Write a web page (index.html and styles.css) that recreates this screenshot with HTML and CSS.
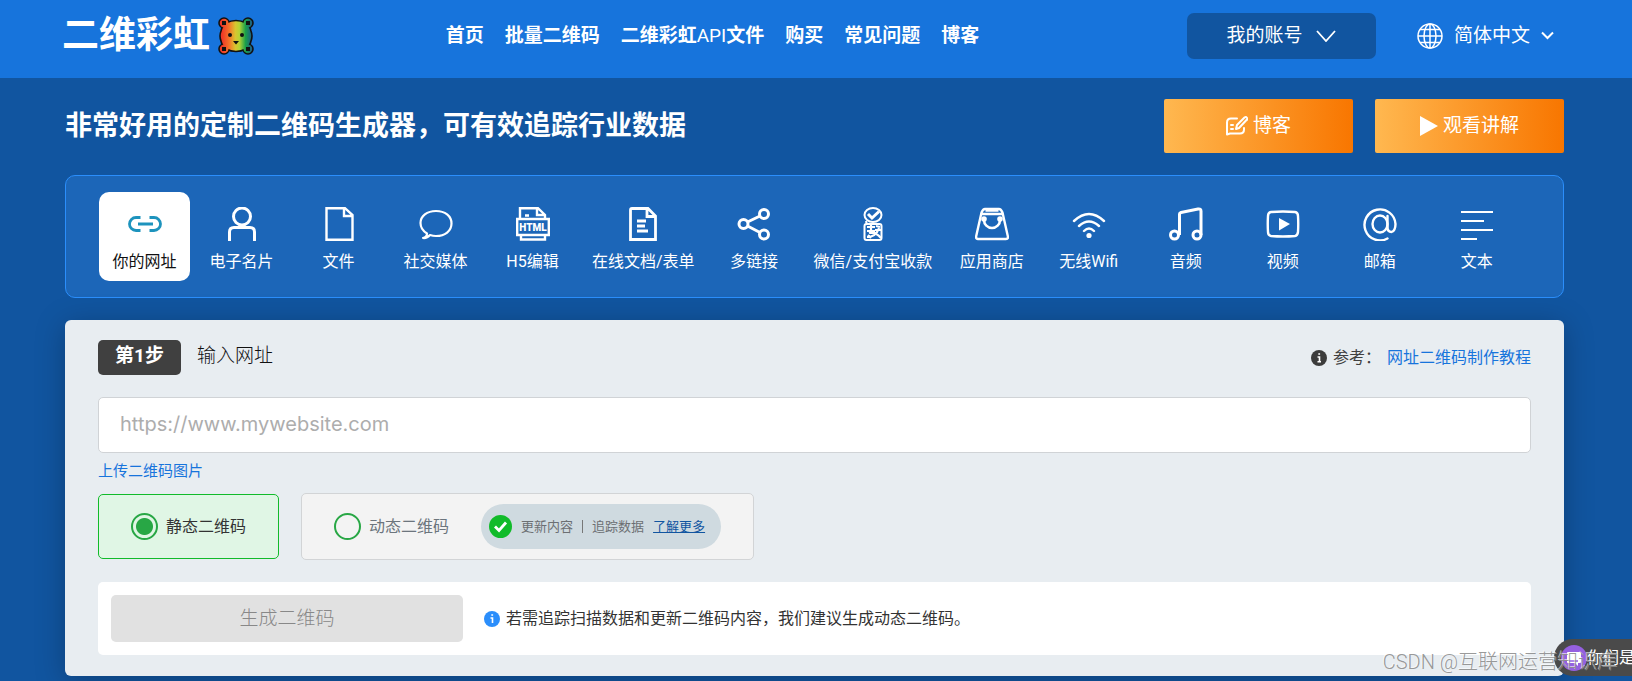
FILE: index.html
```html
<!DOCTYPE html>
<html lang="zh-CN">
<head>
<meta charset="utf-8">
<title>二维彩虹</title>
<link rel="stylesheet" href="styles.css">
</head>
<body>
<header class="header">
  <a class="logo" href="#">
    <span class="logo-text">二维彩虹</span>
    <svg class="logo-bear" viewBox="0 0 36 38" aria-hidden="true">
      <defs>
        <linearGradient id="rainbow" gradientUnits="userSpaceOnUse" x1="1" y1="0" x2="35" y2="0">
          <stop offset="0.1" stop-color="#f03a26"/><stop offset="0.3" stop-color="#f5742a"/><stop offset="0.48" stop-color="#d9c52f"/><stop offset="0.6" stop-color="#b5d334"/><stop offset="0.78" stop-color="#1aa04a"/><stop offset="0.96" stop-color="#1d5f86"/>
        </linearGradient>
      </defs>
      <g fill="url(#rainbow)" stroke="#111" stroke-width="1.6">
        <circle cx="6" cy="6" r="5"/><circle cx="30" cy="6" r="5"/><circle cx="6" cy="32" r="5"/><circle cx="30" cy="32" r="5"/>
        <path d="M8 6Q18 1 28 6Q32 9 33 14Q35 19 33 24Q32 29 28 32Q18 37 8 32Q4 29 3 24Q1 19 3 14Q4 9 8 6Z"/>
      </g>
      <g fill="url(#rainbow)"><circle cx="6.500" cy="6.500" r="4"/><circle cx="29.500" cy="6.500" r="4"/><circle cx="6.500" cy="31.500" r="4"/><circle cx="29.500" cy="31.500" r="4"/></g>
      <g fill="#111"><path d="M4 4h4v4H4zM28 4h4v4h-4zM4 30h4v4H4zM28 30h4v4h-4z"/><circle cx="12" cy="18" r="2"/><circle cx="24" cy="18" r="2"/><path d="M15 24h6l-3 3.500z"/></g>
    </svg>
  </a>
  <nav class="nav">
    <a href="#">首页</a>
    <a href="#">批量二维码</a>
    <a href="#">二维彩虹<span class="latin">API</span>文件</a>
    <a href="#">购买</a>
    <a href="#">常见问题</a>
    <a href="#">博客</a>
  </nav>
  <button class="account" type="button">我的账号
    <svg width="20" height="12" viewBox="0 0 20 12" fill="none" stroke="#fff" stroke-width="1.800"><path d="M1 1l9 10 9-10"/></svg>
  </button>
  <button class="language" type="button">
    <svg width="26" height="26" viewBox="0 0 26 26" fill="none" stroke="#fff" stroke-width="1.500"><circle cx="13" cy="13" r="12"/><ellipse cx="13" cy="13" rx="6" ry="12"/><path d="M13 1v24M1 13h24M3 6.500h20M3 19.500h20"/></svg>
    <span>简体中文</span>
    <svg width="13" height="9" viewBox="0 0 13 9" fill="none" stroke="#fff" stroke-width="2"><path d="M1 1.500l5.500 5.500L12 1.500"/></svg>
  </button>
</header>

<main class="main">
  <div class="intro">
    <h1 class="title">非常好用的定制二维码生成器，可有效追踪行业数据</h1>
    <a class="cta" href="#">
      <svg width="22" height="20" viewBox="0 0 22 20" fill="none" stroke="#fff" stroke-width="2" stroke-linecap="round" stroke-linejoin="round"><path d="M11 2.500H5Q1 2.500 1 6.500V18.500L4 17.500H14Q18 17.500 18 13.500V12M10 13l1-4L18.500 1.500Q20 .500 21 2T20.500 4L13 12zM5 9h2M5 13h2"/></svg>
      博客</a>
    <a class="cta" href="#">
      <svg width="18" height="20" viewBox="0 0 18 20"><path d="M0 0l18 10L0 20z" fill="#fff"/></svg>
      观看讲解</a>
  </div>

  <div class="types">
    <button class="type active" type="button">
      <svg viewBox="0 0 34 34" fill="none" stroke="#1d93bd" stroke-width="2.800"><path d="M12.500 10.500H8a6.500 6.500 0 0 0 0 13h4.500M21.500 10.500h4.500a6.500 6.500 0 0 1 0 13h-4.500M10 17h15"/></svg>你的网址</button>
    <button class="type" type="button">
      <svg viewBox="0 0 34 34" fill="none" stroke="#fff" stroke-width="3"><circle cx="17" cy="9.500" r="8.500"/><path d="M4.500 34V25Q4.500 20.500 9 20.500H25Q29.500 20.500 29.500 25V34"/></svg>电子名片</button>
    <button class="type" type="button">
      <svg viewBox="0 0 34 34" fill="none" stroke="#fff" stroke-width="2.400"><path d="M4.500 1.200H23L30.500 8V32.800H4.500ZM22 1V9H30"/></svg>文件</button>
    <button class="type" type="button">
      <svg viewBox="0 0 34 34" fill="none" stroke="#fff" stroke-width="2.200" stroke-linejoin="round"><path d="M8 26.500Q1.500 22.500 1.500 16C1.500 9 8 4 17 4S32.500 9 32.500 16.500 26 29 17 29Q14 29 11 28Q8 31.500 4 31Q8 30 8 26.500Z"/></svg>社交媒体</button>
    <button class="type" type="button">
      <svg viewBox="0 0 34 34" fill="none" stroke="#fff" stroke-width="2.400"><path d="M4 12V1.200H22L29 8V12M21 1V8H29M9 8.500h4M1.200 12H32.800V28H1.200ZM5 28V32.500H29V28"/><text class="html-mark" x="17" y="23.500" text-anchor="middle">HTML</text></svg>H5编辑</button>
    <button class="type" type="button">
      <svg viewBox="0 0 34 34" fill="none" stroke="#fff" stroke-width="2.800"><path d="M6 1.500H22L29.500 9V32.500H4.500V3Q4.500 1.500 6 1.500ZM21 2V9.500H29M11 14H20M11 19H19M11 24H22"/></svg>在线文档/表单</button>
    <button class="type" type="button">
      <svg viewBox="0 0 34 34" fill="none" stroke="#fff" stroke-width="3"><circle cx="6.500" cy="17" r="4.500"/><circle cx="27" cy="7" r="4.500"/><circle cx="27" cy="27.500" r="4.500"/><path d="M10.500 15L23 9M10.500 19L23 25.500"/></svg>多链接</button>
    <button class="type" type="button">
      <svg viewBox="0 0 34 34" fill="none" stroke="#fff" stroke-width="2"><ellipse cx="17" cy="8" rx="8.500" ry="7"/><path d="M12 7l4 4 7-6.500" stroke-width="3"/><path d="M10 14l1 4"/><rect x="8.500" y="17" width="17" height="16" rx="2"/><path d="M11 20h8M15 18v9M11 24h8M20 19l4 1M23 21Q20 30 11 30M13 26q6-2 12 5M19 23h6M12 28l3 3" stroke-width="2.200"/></svg>微信/支付宝收款</button>
    <button class="type" type="button">
      <svg viewBox="0 0 34 34" fill="none" stroke="#fff" stroke-width="2.400"><path d="M6.500 5.500Q8 2 10 2H24Q26 2 27.500 5.500L33 30Q33 32 31 32H3Q1 32 1 30ZM6.500 7H27.500M10.500 3.500H23.500"/><path d="M9 11V13A8 8 0 0 0 25 13V11" stroke-width="2.600"/><g fill="#fff" stroke="none"><circle cx="9" cy="12" r="2.800"/><circle cx="25" cy="12" r="2.800"/></g></svg>应用商店</button>
    <button class="type" type="button">
      <svg viewBox="0 0 34 34" fill="none" stroke="#fff" stroke-width="2.400" stroke-linecap="round"><path d="M2 14Q17 0 32 14M7 19Q17 10 27 19M12 24Q17 19 22 24"/><circle cx="17" cy="28.500" r="2.600" fill="#fff" stroke="none"/></svg>无线Wifi</button>
    <button class="type" type="button">
      <svg viewBox="0 0 34 34" fill="none" stroke="#fff" stroke-width="3" stroke-linejoin="round"><circle cx="5.500" cy="28" r="4"/><circle cx="28" cy="28" r="4"/><path d="M10.500 28V7Q10.500 6 12 5.500L29 2Q32 1.500 32 4V28"/></svg>音频</button>
    <button class="type" type="button">
      <svg viewBox="0 0 34 34" fill="none" stroke="#fff" stroke-width="2.400"><path d="M5 5Q17 4 29 5Q32 5.500 32 9Q32.500 17 32 25Q31.500 28.500 29 29Q17 30 5 29Q2 28.500 2 25Q1.500 17 2 9Q2 5.500 5 5Z"/><path d="M13 11L24 17 13 23.500Z" fill="#fff" stroke="none"/></svg>视频</button>
    <button class="type" type="button">
      <svg viewBox="0 0 34 34" fill="none" stroke="#fff" stroke-width="2.400" stroke-linecap="round"><ellipse cx="17" cy="17" rx="7.500" ry="8.500"/><path d="M24.500 9V20Q24.500 25 28.500 25C31 25 32.500 21 32.500 17A15.500 15.500 0 1 0 24.500 31.500"/></svg>邮箱</button>
    <button class="type" type="button">
      <svg viewBox="0 0 34 34" fill="none" stroke="#fff" stroke-width="2.200"><path d="M1 5H33M1 14H24M1 23H33M1 32H17"/></svg>文本</button>
  </div>

  <form class="card">
    <div class="step">
      <span class="badge">第1步</span>
      <label class="step-title" for="url">输入网址</label>
      <div class="reference">
        <svg width="16" height="16" viewBox="0 0 16 16"><circle cx="8" cy="8" r="8" fill="#3c3c3c"/><path d="M6.500 7H8.500V11.500M6.500 11.800h3.500M7.300 4h1.800" stroke="#fff" stroke-width="1.600" fill="none"/></svg>
        <span>参考：</span><a href="#">网址二维码制作教程</a>
      </div>
    </div>
    <input class="url" id="url" type="text" placeholder="https://www.mywebsite.com">
    <a class="upload" href="#">上传二维码图片</a>
    <div class="options">
      <div class="option selected"><label class="choice"><input type="radio" name="kind" checked>静态二维码</label></div>
      <div class="option"><label class="choice"><input type="radio" name="kind">动态二维码</label>
        <div class="pill">
          <svg width="23" height="23" viewBox="0 0 23 23"><circle cx="11.500" cy="11.500" r="11.500" fill="#11bb2a"/><path d="M6 11.500l4 4 7-8" stroke="#fff" stroke-width="2.800" fill="none"/></svg>
          <span>更新内容</span><span class="bar"></span><span>追踪数据</span><a href="#">了解更多</a>
        </div>
      </div>
    </div>
    <div class="submit-row">
      <button class="submit" type="button" disabled>生成二维码</button>
      <p class="hint">
        <svg width="16" height="16" viewBox="0 0 16 16"><circle cx="8" cy="8" r="8" fill="#2b8efb"/><path d="M6.500 7H8.500V12M7.300 4h1.800" stroke="#fff" stroke-width="1.600" fill="none"/></svg>
        若需追踪扫描数据和更新二维码内容，我们建议生成动态二维码。</p>
    </div>
  </form>
</main>

<button class="chat" type="button">
  <svg width="26" height="26" viewBox="0 0 26 26"><circle cx="13" cy="13" r="13" fill="#9560e0"/><path d="M7 7H19Q20 7 20 8V17Q20 18 19 18H17V21L14 18H7Q6 18 6 17V8Q6 7 7 7Z" fill="#fff"/><path d="M8 16h9" stroke="#9560e0" stroke-width="1.500"/></svg>
  <span>你们是</span>
</button>
<div class="watermark">CSDN @互联网运营知识库</div>
</body>
</html>
```

FILE: styles.css
```css
* { box-sizing: border-box; }
body {
  margin: 0;
  position: relative;
  overflow-x: hidden;
  background: #1155a0;
  color: #222;
  font-family: Roboto, "Noto Sans CJK SC", sans-serif;
  font-size: 16px;
  font-weight: 400;
  line-height: 24px;
}
a { color: #1774dc; text-decoration: none; }
button { font: inherit; border: 0; cursor: pointer; }
svg { flex: none; }

.header {
  display: flex;
  align-items: center;
  height: 78px;
  padding: 0 68px 7px 62px;
  background: #1774dc;
  color: #fff;
}
.logo { display: flex; align-items: center; gap: 8px; color: #fff; }
.logo-text { font-size: 37px; line-height: 44px; font-weight: 700; }
.logo-bear { width: 36px; height: 38px; }
.nav { display: flex; gap: 21px; margin: 0 auto; padding-right: 16px; }
.nav a { color: #fff; font-size: 19px; font-weight: 700; white-space: nowrap; }
.nav .latin { font-weight: 400; }
.account {
  display: flex;
  align-items: center;
  justify-content: center;
  gap: 14px;
  width: 189px;
  height: 46px;
  border-radius: 7px;
  background: #1155a0;
  color: #fff;
  font-size: 19px;
}
.language {
  display: flex;
  align-items: center;
  gap: 11px;
  margin-left: 41px;
  padding: 0 10px 0 0;
  background: none;
  color: #fff;
  font-size: 19px;
}

.main { padding: 21px 68px 5px 65px; }
.intro { display: flex; align-items: center; gap: 22px; margin-bottom: 22px; }
.title { flex: 1; margin: 0; color: #fff; font-size: 27px; line-height: 36px; font-weight: 700; }
.cta {
  display: flex;
  align-items: center;
  justify-content: center;
  gap: 5px;
  width: 189px;
  height: 54px;
  border-radius: 2px;
  background: linear-gradient(90deg, #ffb850, #f87600);
  color: #fff;
  font-size: 19px;
}

.types {
  display: flex;
  gap: 6px;
  padding: 16px 33px;
  border: 1px solid #2b8efb;
  border-radius: 10px;
  background: #1c66b8;
}
.type {
  display: flex;
  flex-direction: column;
  align-items: center;
  gap: 9px;
  min-width: 91px;
  height: 89px;
  padding: 15px 8px 0;
  border-radius: 10px;
  background: none;
  color: #fff;
  white-space: nowrap;
}
.type svg { width: 34px; height: 34px; }
.type.active { background: #fff; color: #111; }
.html-mark { fill: #fff; stroke: none; font: 900 10px Roboto, sans-serif; }

.card {
  margin-top: 22px;
  padding: 20px 33px 21px;
  border-radius: 6px;
  background: #e8edf1;
  box-shadow: 0 5px 30px rgba(0, 0, 0, 0.25);
}
.step { display: flex; align-items: center; }
.badge {
  width: 83px;
  height: 35px;
  border-radius: 5px;
  background: #404040;
  color: #fff;
  font-size: 19px;
  font-weight: 700;
  line-height: 32px;
  text-align: center;
}
.step-title { margin-left: 16px; padding-bottom: 4px; font-size: 19px; font-weight: 300; color: #111; }
.reference { display: flex; align-items: center; gap: 6px; margin-left: auto; color: #404040; }
.url {
  display: block;
  width: 100%;
  height: 56px;
  margin: 22px 0 6px;
  padding: 0 21px 2px;
  border: 1px solid #d0d3d6;
  border-radius: 5px;
  background: #fff;
  font: 400 20px Inter, sans-serif;
}
.url::placeholder { color: #adadad; }
.upload { display: block; font-size: 15px; }
.options { display: flex; align-items: center; gap: 22px; margin-top: 10px; }
.option {
  display: flex;
  align-items: center;
  gap: 32px;
  height: 67px;
  padding: 0 32px;
  border: 1px solid #d2d4d6;
  border-radius: 5px;
  background: #f3f3f3;
  color: #6c757d;
}
.option.selected { height: 65px; border-color: #11bb2a; background: #e0f6e5; color: #333; }
.choice { display: flex; align-items: center; gap: 8px; }
.choice input {
  appearance: none;
  width: 27px;
  height: 27px;
  margin: 0;
  border: 2px solid #28a745;
  border-radius: 50%;
}
.choice input:checked { background: radial-gradient(circle, #28a745 8px, transparent 9px); }
.pill {
  display: flex;
  align-items: center;
  gap: 9px;
  height: 45px;
  padding: 0 16px 0 8px;
  border-radius: 23px;
  background: #cfdae0;
  color: #6c6f73;
  font-size: 13px;
}
.pill a { color: #1155a0; text-decoration: underline; }
.bar { width: 1px; height: 13px; background: #777; }
.submit-row {
  display: flex;
  align-items: center;
  gap: 21px;
  margin-top: 22px;
  padding: 13px;
  border-radius: 5px;
  background: #fff;
}
.submit {
  width: 352px;
  height: 47px;
  border-radius: 5px;
  background: #e1e1e1;
  color: #888;
  font-size: 19px;
  font-weight: 300;
}
.hint { display: flex; align-items: center; gap: 6px; margin: 0; color: #333; }

.chat {
  position: absolute;
  right: 0;
  bottom: 5px;
  display: flex;
  align-items: center;
  width: 78px;
  height: 37px;
  padding: 0 0 0 7px;
  overflow: hidden;
  border-radius: 19px 0 0 19px;
  background: #4a4a4a;
  color: #fff;
  white-space: nowrap;
}
.watermark {
  position: absolute;
  right: 14px;
  bottom: 7px;
  color: rgba(140, 140, 140, 0.9);
  font-size: 20px;
  font-weight: 300;
  text-shadow: -1px -1px 0 rgba(255, 255, 255, 0.6);
  pointer-events: none;
}
```
